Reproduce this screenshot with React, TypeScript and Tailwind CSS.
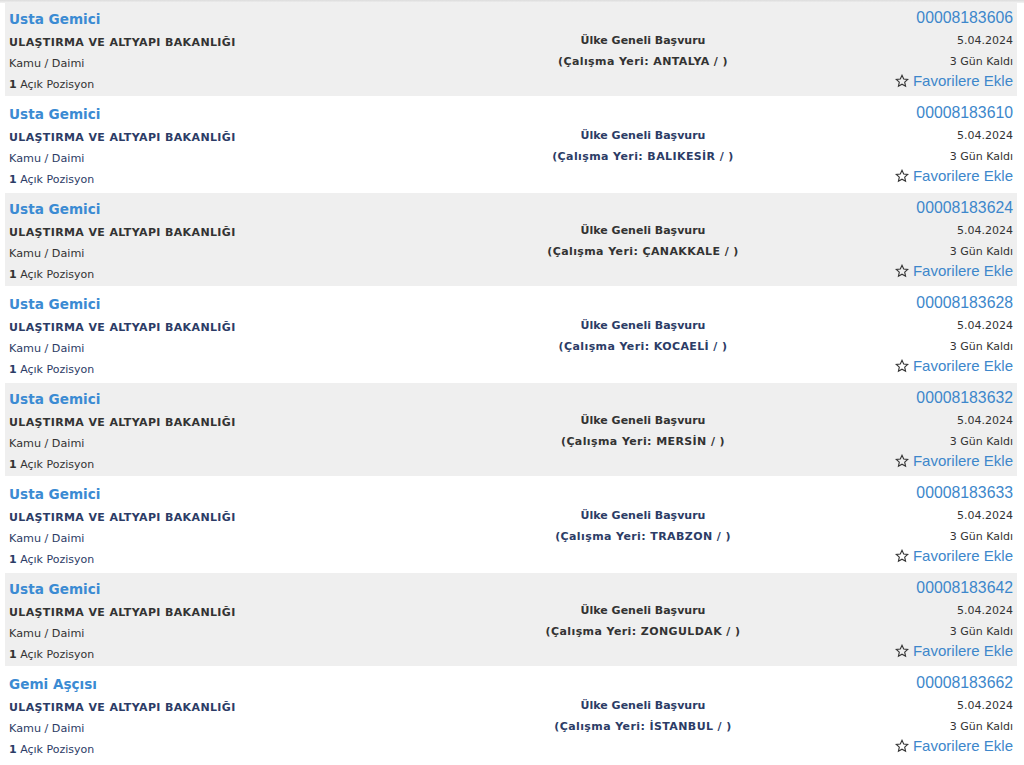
import React from 'react';

interface Ilan {
  title: string;
  id: string;
  city: string;
}

const ILANLAR: Ilan[] = [
  { title: 'Usta Gemici', id: '00008183606', city: 'ANTALYA' },
  { title: 'Usta Gemici', id: '00008183610', city: 'BALIKESİR' },
  { title: 'Usta Gemici', id: '00008183624', city: 'ÇANAKKALE' },
  { title: 'Usta Gemici', id: '00008183628', city: 'KOCAELİ' },
  { title: 'Usta Gemici', id: '00008183632', city: 'MERSİN' },
  { title: 'Usta Gemici', id: '00008183633', city: 'TRABZON' },
  { title: 'Usta Gemici', id: '00008183642', city: 'ZONGULDAK' },
  { title: 'Gemi Aşçısı', id: '00008183662', city: 'İSTANBUL' },
];

const StarOutline: React.FC = () => (
  <svg width="14" height="14" viewBox="0 0 24 24" className="inline-block mr-[4px] -mt-[2px] align-middle">
    <polygon
      points="12,2.2 14.9,8.6 21.8,9.3 16.6,14 18.1,20.9 12,17.4 5.9,20.9 7.4,14 2.2,9.3 9.1,8.6"
      fill="none"
      stroke="#333"
      strokeWidth="1.9"
      strokeLinejoin="miter"
    />
  </svg>
);

const IlanRow: React.FC<{ ilan: Ilan; striped: boolean }> = ({ ilan, striped }) => {
  // white rows use the navy text colour, striped rows a plain dark gray
  const textColor = striped ? 'text-[#333333]' : 'text-[#2c3c66]';
  return (
    <div
      className={`grid grid-cols-[506px_264px_1fr] h-[93px] mb-[2px] ${striped ? 'bg-[#efefef]' : 'bg-white'}`}
    >
      <div className="pl-[4px] pt-[7px]">
        <div className="text-[13.6px] leading-[18px] font-bold text-[#3b8bd3] mb-[4px]">{ilan.title}</div>
        <div className={`text-[11px] leading-[21px] font-bold tracking-[0.37px] ${textColor}`}>
          ULAŞTIRMA VE ALTYAPI BAKANLIĞI
        </div>
        <div className={`text-[11.2px] leading-[21px] ${textColor}`}>Kamu / Daimi</div>
        <div className={`text-[11px] leading-[21px] ${textColor}`}>
          <span className="font-bold">1</span> Açık Pozisyon
        </div>
      </div>

      <div className={`pt-[27px] text-center text-[11px] leading-[21px] font-bold ${textColor}`}>
        <div>Ülke Geneli Başvuru</div>
        <div className="tracking-[0.4px]">(Çalışma Yeri: {ilan.city} / )</div>
      </div>

      <div className="pr-[4px] pt-[6px] text-right">
        <div className="font-['Liberation_Sans',Arial,sans-serif] text-[15.8px] leading-[18px] text-[#3d87cb]">
          {ilan.id}
        </div>
        <div className="mt-[3px] text-[11px] leading-[21px] text-[#333333]">5.04.2024</div>
        <div className="text-[11px] leading-[21px] text-[#333333]">3 Gün Kaldı</div>
        <div className="font-['Liberation_Sans',Arial,sans-serif] text-[15px] leading-[18px] text-[#3d87cb]">
          <StarOutline />
          Favorilere Ekle
        </div>
      </div>
    </div>
  );
};

export default function App() {
  return (
    <div className="min-h-[765px] bg-white font-['DejaVu_Sans',Verdana,sans-serif]">
      <div className="h-[3px] bg-gradient-to-b from-[#dcdcdc] to-[#f3f3f3]" />
      <div className="px-[5px] pr-[7px]">
        {ILANLAR.map((ilan, i) => (
          <IlanRow key={ilan.id} ilan={ilan} striped={i % 2 === 0} />
        ))}
      </div>
    </div>
  );
}
